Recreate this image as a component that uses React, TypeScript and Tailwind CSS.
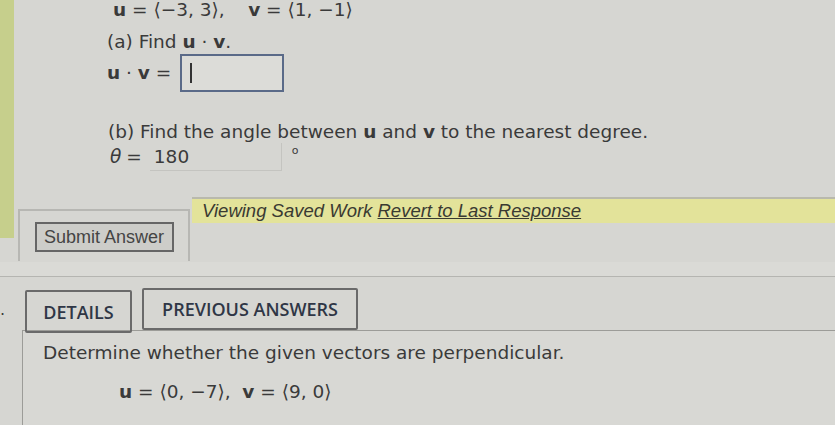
import React from "react";

const bold = "font-bold";

function Vec({ a, b }: { a: string; b: string }) {
  return (
    <span>
      ⟨{a}, {b}⟩
    </span>
  );
}

export default function App() {
  return (
    <div className="w-[835px] h-[425px] overflow-hidden bg-[#d6d6d2] text-[#3a3a3a] font-['DejaVu_Sans',sans-serif] text-[18.5px] leading-[22px]">
      {/* part one: the earlier question */}
      <div className="flex h-[262px]">
        <div className="w-[14px] h-[238px] bg-[#c6cf8c] shrink-0" />
        <div className="flex-1 flex flex-col">
          <div className="ml-[99px] mt-[0px] h-[19px] leading-[19px] whitespace-pre">
            <span className={bold}>u</span> = <Vec a="−3" b="3" />,{"    "}
            <span className={bold}>v</span> = <Vec a="1" b="−1" />
          </div>
          <div className="ml-[93px] mt-[12px] h-[22px] flex items-center">
            (a) Find&nbsp;<span className={bold}>u</span>&nbsp;·&nbsp;<span className={bold}>v</span>.
          </div>
          <div className="ml-[93px] mt-[1px] h-[38px] flex items-center gap-[9px]">
            <span>
              <span className={bold}>u</span> · <span className={bold}>v</span> =
            </span>
            <div className="w-[104px] h-[38px] border-2 border-[#5a6a88] bg-[#dcdcd8] flex items-center pl-[8px]">
              <div className="w-[2px] h-[20px] bg-[#333]" />
            </div>
          </div>
          <div className="ml-[94px] mt-[29px] h-[22px] flex items-center whitespace-pre">
            (b) Find the angle between <span className={bold}>u</span> and <span className={bold}>v</span> to the nearest degree.
          </div>
          <div className="ml-[96px] h-[28px] flex items-start">
            <span className="italic mt-[3px]">θ</span>
            <span className="ml-[5px] mt-[3px]">=</span>
            <div className="ml-[8px] w-[132px] h-[28px] border-b border-r border-[#c4c4c0] pl-[4px] pt-[3px]">180</div>
            <span className="ml-[10px] text-[11px] leading-[12px] mt-[2px]">o</span>
          </div>
          <div className="mt-[26px] h-[64px] flex items-start">
            <div className="ml-[4px] mt-[12px] w-[172px] h-[52px] border-2 border-[#b7b7b3] border-b-0 flex items-start justify-center pt-[11px]">
              <div className="w-[139px] h-[30px] border-2 border-[#666] bg-[#cdcdc9] flex items-center justify-center font-['Liberation_Sans',sans-serif] text-[18px] text-[#444]">
                Submit Answer
              </div>
            </div>
            <div className="flex-1 ml-[2px] h-[26px] bg-[#e3e39a] border-t-2 border-[#b9b9ac] flex items-center pl-[10px] font-['Liberation_Sans',sans-serif] italic text-[18.5px] text-[#3a3a32] whitespace-pre">
              Viewing Saved Work <span className="underline">Revert to Last Response</span>
            </div>
          </div>
        </div>
      </div>

      {/* part two: the next question */}
      <div className="h-[14px] bg-[#dadad6]" />
      <div className="border-t border-[#b5b5b1] h-[54px] flex items-start">
        <span className="mt-[22px] w-[25px] text-[16px]">.</span>
        <div className="mt-[13px] w-[107px] h-[43px] border-2 border-[#6a6a6a] rounded-[2px] flex items-center justify-center font-['Open_Sans',sans-serif] font-semibold text-[18px] text-[#2f3646]">
          DETAILS
        </div>
        <div className="ml-[10px] mt-[11px] w-[216px] h-[42px] border-2 border-[#6a6a6a] rounded-[2px] flex items-center justify-center font-['Open_Sans',sans-serif] font-semibold text-[18px] text-[#2f3646]">
          PREVIOUS ANSWERS
        </div>
      </div>
      <div className="border-t border-[#9c9c98] ml-[22px] border-l h-[100px] bg-[#d8d8d4] pl-[20px] pt-[11px]">
        <div className="whitespace-pre">Determine whether the given vectors are perpendicular.</div>
        <div className="ml-[76px] mt-[17px] whitespace-pre">
          <span className={bold}>u</span> = <Vec a="0" b="−7" />,{"  "}
          <span className={bold}>v</span> = <Vec a="9" b="0" />
        </div>
      </div>
    </div>
  );
}
